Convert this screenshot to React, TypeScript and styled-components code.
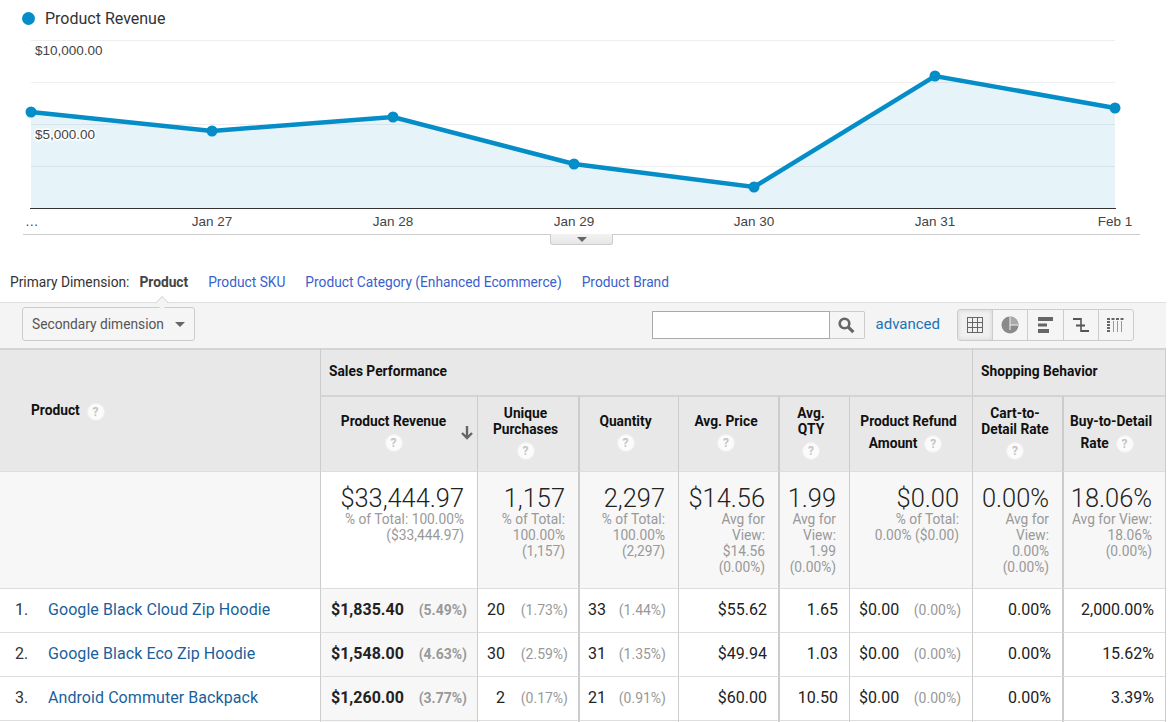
import React from 'react';
import styled, { createGlobalStyle } from 'styled-components';

const GlobalStyle = createGlobalStyle`
  html, body {
    margin: 0;
    padding: 0;
    background: #fff;
    overflow: hidden;
    font-family: Roboto, "Liberation Sans", sans-serif;
    color: #212121;
  }
`;

const Page = styled.div`
  width: 1166px;
  height: 722px;
  overflow: hidden;
`;

const Legend = styled.div`
  display: flex;
  align-items: center;
  gap: 10px;
  height: 36px;
  padding-left: 22px;
  font-size: 16px;
  color: #333;
`;

const LegendDot = styled.span`
  width: 13px;
  height: 13px;
  border-radius: 50%;
  background: #058dc7;
`;

const ChartSvg = styled.svg`
  display: block;
  width: 1166px;
  height: 199px;
`;

const ToggleRow = styled.div`
  display: flex;
  align-items: flex-start;
  height: 33px;
  padding-left: 550px;
`;

const Toggle = styled.div`
  width: 63px;
  height: 11px;
  margin-top: -1px;
  box-sizing: border-box;
  display: flex;
  justify-content: center;
  align-items: center;
  background: linear-gradient(#f2f2f2, #e6e6e6);
  border: 1px solid #ccc;
  border-top: none;
  border-radius: 0 0 3px 3px;

  &::after {
    content: '';
    border-left: 5px solid transparent;
    border-right: 5px solid transparent;
    border-top: 5px solid #666;
  }
`;

const DimensionRow = styled.div`
  position: relative;
  display: flex;
  align-items: center;
  height: 34px;
  padding: 0 0 6px 10px;
  box-sizing: border-box;
  font-size: 13.75px;
  color: #333;
`;

const DimensionLabel = styled.span`
  margin-right: 10px;
`;

const DimensionCurrent = styled.span`
  font-weight: 700;
  color: #444;
  margin-right: 20px;
`;

const DimensionLink = styled.a`
  color: #3a5fcd;
  margin-right: 20px;
`;

const Notch = styled.span`
  position: absolute;
  left: 157px;
  bottom: -1px;
  width: 9px;
  height: 9px;
  background: #f4f4f4;
  border-top: 1px solid #ddd;
  border-left: 1px solid #ddd;
  transform: translateY(5px) rotate(45deg);
`;

const Toolbar = styled.div`
  display: flex;
  align-items: center;
  height: 46px;
  padding: 0 32px 3px 22px;
  box-sizing: border-box;
  background: #f4f4f4;
  border-top: 1px solid #e0e0e0;
`;

const SecondaryButton = styled.div`
  display: flex;
  align-items: center;
  justify-content: space-between;
  width: 173px;
  height: 34px;
  padding: 0 9px;
  box-sizing: border-box;
  margin-right: auto;
  background: #f5f5f5;
  border: 1px solid #ccc;
  border-radius: 3px;
  font-size: 13.75px;
  color: #555;

  &::after {
    content: '';
    border-left: 5px solid transparent;
    border-right: 5px solid transparent;
    border-top: 5px solid #666;
  }
`;

const SearchBox = styled.div`
  display: flex;
  width: 213px;
  height: 28px;
  margin-top: 2px;
`;

const SearchInput = styled.div`
  flex: 1;
  background: #fff;
  border: 1px solid #aaa;
`;

const SearchButton = styled.div`
  width: 35px;
  display: flex;
  align-items: center;
  justify-content: center;
  box-sizing: border-box;
  background: #f5f5f5;
  border: 1px solid #ccc;
  border-left: none;
  border-radius: 0 2px 2px 0;
`;

const Advanced = styled.a`
  margin: 0 17px 0 11px;
  font-size: 15px;
  color: #1a73b5;
`;

const ViewSwitch = styled.div`
  display: flex;
  width: 177px;
  height: 32px;
  margin-top: 2px;
  box-sizing: border-box;
  border: 1px solid #ccc;
  border-radius: 3px;
  background: #f5f5f5;
`;

const ViewButton = styled.div<{ $active?: boolean }>`
  flex: 1;
  display: flex;
  align-items: center;
  justify-content: center;
  background: ${(p) => (p.$active ? '#f0f0f0' : 'transparent')};
  box-shadow: ${(p) => (p.$active ? 'inset 0 0 4px #d0d0d0' : 'none')};

  & + & {
    border-left: 1px solid #ccc;
  }
`;

const Table = styled.table`
  width: 1166px;
  table-layout: fixed;
  border-collapse: separate;
  border-spacing: 0;
  font-size: 13.75px;
  border-right: 1px solid #ccc;
`;

const Head = styled.th<{ $thick?: boolean; $center?: boolean; $endPad?: number }>`
  position: relative;
  box-sizing: border-box;
  padding: 0 ${(p) => p.$endPad ?? 8}px 0 8px;
  background: #e8e8e8;
  font-weight: 700;
  line-height: 16px;
  color: #111;
  text-align: ${(p) => (p.$center ? 'center' : 'left')};
  vertical-align: middle;
  border-top: 2px solid #d4d4d4;
  border-left: ${(p) => (p.$thick ? '2px solid #ccc' : '1px solid #ccc')};
`;

const GroupHead = styled(Head)`
  padding-bottom: 4px;
`;

const ColumnHead = styled(Head)`
  padding-bottom: 5px;
`;

const ProductHead = styled(Head)`
  padding-left: 31px;
  padding-top: 2px;
  border-left: none;
`;

const HeadLine = styled.div<{ $inset?: number }>`
  margin: 0 -4px;
  padding-right: ${(p) => p.$inset ?? 0}px;
  line-height: 22px;
  white-space: nowrap;
`;

const Help = styled.span`
  display: inline-flex;
  align-items: center;
  justify-content: center;
  width: 18px;
  height: 18px;
  border-radius: 50%;
  background: #fbfbfb;
  border: 1px solid #efefef;
  box-sizing: border-box;
  font-size: 12px;
  font-weight: 700;
  color: #c4c4c4;
  vertical-align: middle;
`;

const HelpRow = styled.div`
  margin-top: 4px;
  height: 18px;
  line-height: 18px;
`;

const SortArrow = styled.svg`
  position: absolute;
  right: 3px;
  top: 28px;
`;

const SummaryCell = styled.td<{ $primary?: boolean; $thick?: boolean }>`
  box-sizing: border-box;
  height: 117px;
  padding: 14px 13px 0 6px;
  vertical-align: top;
  text-align: right;
  background: ${(p) => (p.$primary ? '#fff' : '#f7f7f7')};
  border-top: 1px solid #ddd;
  border-left: ${(p) => (p.$thick ? '2px solid #ccc' : '1px solid #ccc')};
`;

const SummaryBlank = styled(SummaryCell)`
  border-left: none;
`;

const SummaryValue = styled.div`
  font-size: 25.4px;
  font-weight: 300;
  line-height: 25px;
  color: #222;
`;

const SummaryNote = styled.div`
  font-size: 13.75px;
  line-height: 16px;
  color: #999;
`;

const DataCell = styled.td<{ $primary?: boolean; $thick?: boolean; $endPad?: number }>`
  box-sizing: border-box;
  height: 44px;
  padding: 0 ${(p) => p.$endPad ?? 11}px 2px ${(p) => (p.$primary ? 10 : p.$thick ? 8 : 9)}px;
  vertical-align: middle;
  font-size: 16px;
  color: #222;
  background: ${(p) => (p.$primary ? '#f7f7f7' : '#fff')};
  border-top: 1px solid #ddd;
  border-left: ${(p) => (p.$thick ? '2px solid #ccc' : '1px solid #ccc')};
`;

const ProductCell = styled(DataCell)`
  padding-left: 15px;
  border-left: none;
`;

const RowIndex = styled.span`
  display: inline-block;
  width: 33px;
  color: #333;
`;

const ProductLink = styled.a`
  letter-spacing: 0.07px;
  color: #1a5f9c;
`;

const Split = styled.div`
  display: flex;
  justify-content: space-between;
  align-items: center;
`;

const Value = styled.span<{ $bold?: boolean; $slot?: number }>`
  font-weight: ${(p) => (p.$bold ? 700 : 400)};
  min-width: ${(p) => p.$slot ?? 0}px;
  text-align: right;
`;

const Percent = styled.span<{ $bold?: boolean }>`
  font-size: 14px;
  font-weight: ${(p) => (p.$bold ? 700 : 400)};
  color: #999;
`;

const Right = styled.div`
  text-align: right;
`;

const points: [number, number][] = [
  [31, 112], [212, 131], [393, 117], [574, 164], [754, 187], [935, 76], [1115, 108],
];
const ticks: [number, string][] = [
  [212, 'Jan 27'], [393, 'Jan 28'], [574, 'Jan 29'], [754, 'Jan 30'], [935, 'Jan 31'], [1115, 'Feb 1'],
];
const gridY = [40, 82, 124, 166];

const widths = [320, 157, 101, 100, 100, 71, 123, 90, 103];

const summary: { value: string; notes: string[]; thick?: boolean; primary?: boolean }[] = [
  { value: '$33,444.97', notes: ['% of Total: 100.00%', '($33,444.97)'], primary: true },
  { value: '1,157', notes: ['% of Total:', '100.00%', '(1,157)'] },
  { value: '2,297', notes: ['% of Total:', '100.00%', '(2,297)'], thick: true },
  { value: '$14.56', notes: ['Avg for', 'View:', '$14.56', '(0.00%)'] },
  { value: '1.99', notes: ['Avg for', 'View:', '1.99', '(0.00%)'], thick: true },
  { value: '$0.00', notes: ['% of Total:', '0.00% ($0.00)'] },
  { value: '0.00%', notes: ['Avg for', 'View:', '0.00%', '(0.00%)'] },
  { value: '18.06%', notes: ['Avg for View:', '18.06%', '(0.00%)'], thick: true },
];

const rows = [
  {
    name: 'Google Black Cloud Zip Hoodie', revenue: ['$1,835.40', '(5.49%)'], unique: ['20', '(1.73%)'],
    qty: ['33', '(1.44%)'], price: '$55.62', avg: '1.65', refund: ['$0.00', '(0.00%)'], cart: '0.00%', buy: '2,000.00%',
  },
  {
    name: 'Google Black Eco Zip Hoodie', revenue: ['$1,548.00', '(4.63%)'], unique: ['30', '(2.59%)'],
    qty: ['31', '(1.35%)'], price: '$49.94', avg: '1.03', refund: ['$0.00', '(0.00%)'], cart: '0.00%', buy: '15.62%',
  },
  {
    name: 'Android Commuter Backpack', revenue: ['$1,260.00', '(3.77%)'], unique: ['2', '(0.17%)'],
    qty: ['21', '(0.91%)'], price: '$60.00', avg: '10.50', refund: ['$0.00', '(0.00%)'], cart: '0.00%', buy: '3.39%',
  },
];

const Chart = () => (
  <ChartSvg viewBox="0 36 1166 199">
    {gridY.map((y) => (
      <line key={y} x1={31} x2={1115} y1={y + 0.5} y2={y + 0.5} stroke="#eee" />
    ))}
    <polygon
      points={`31,208 ${points.map((p) => p.join(',')).join(' ')} 1115,208`}
      fill="#058dc7"
      fillOpacity={0.1}
    />
    <line x1={30} x2={1116} y1={208.5} y2={208.5} stroke="#333" />
    <polyline
      points={points.map((p) => p.join(',')).join(' ')}
      fill="none"
      stroke="#058dc7"
      strokeWidth={4.5}
    />
    {points.map(([x, y]) => (
      <circle key={x} cx={x} cy={y} r={5.5} fill="#058dc7" />
    ))}
    <g fontFamily="'Liberation Sans', Arial, sans-serif" fontSize={13.5} fill="#444">
      <text x={35} y={55}>$10,000.00</text>
      <text x={35} y={139} stroke="#fff" strokeWidth={3} paintOrder="stroke">$5,000.00</text>
      <text x={25} y={226}>…</text>
      {ticks.map(([x, label]) => (
        <text key={label} x={x} y={226} textAnchor="middle">{label}</text>
      ))}
    </g>
    <line x1={23} x2={1140} y1={234.5} y2={234.5} stroke="#ccc" />
  </ChartSvg>
);

const SearchIcon = () => (
  <svg width="17" height="17" viewBox="0 0 17 17">
    <circle cx="6.5" cy="6.5" r="4.8" fill="none" stroke="#666" strokeWidth="2.6" />
    <line x1="10.2" y1="10.2" x2="15.4" y2="15.2" stroke="#666" strokeWidth="3.2" />
  </svg>
);

const GridIcon = () => (
  <svg width="16" height="16" viewBox="0 0 16 16" fill="none" stroke="#666">
    <rect x="0.5" y="0.5" width="15" height="15" />
    <path d="M5.5 0.5v15M10.5 0.5v15M0.5 5.5h15M0.5 10.5h15" />
  </svg>
);

const PieIcon = () => (
  <svg width="18" height="18" viewBox="0 0 18 18">
    <circle cx="9" cy="9" r="8.5" fill="#8a8a8a" />
    <path d="M9 .5A8.5 8.5 0 0 1 17.5 9H9Z" fill="#a8a8a8" />
    <path d="M9 .5V14M9 9h8.5" fill="none" stroke="#f0f0f0" />
  </svg>
);

const BarsIcon = () => (
  <svg width="16" height="18" viewBox="0 0 16 18" fill="#666">
    <rect x="0" y="1" width="15" height="4" />
    <rect x="0" y="7.5" width="9" height="3" />
    <rect x="0" y="13" width="11" height="4" />
  </svg>
);

const PivotIcon = () => (
  <svg width="16" height="18" viewBox="0 0 16 18" fill="none" stroke="#555">
    <path d="M0 3h8M3 9.5h9M8 15h8" strokeWidth="2" />
    <path d="M8 2v14" strokeWidth="1.6" />
  </svg>
);

const ColumnsIcon = () => (
  <svg width="18" height="14" viewBox="0 0 18 14">
    <path d="M0 1h18" stroke="#666" strokeWidth="2" strokeDasharray="3 1.5" />
    <path d="M1.5 3v11" stroke="#666" strokeWidth="3" strokeDasharray="2 1" />
    <path d="M6.5 3v11M10.5 3v11M14.5 3v11" stroke="#999" />
  </svg>
);

const HelpIcon = () => <Help>?</Help>;

const App: React.FC = () => (
  <Page>
    <GlobalStyle />
    <Legend>
      <LegendDot />
      Product Revenue
    </Legend>
    <Chart />
    <ToggleRow>
      <Toggle />
    </ToggleRow>
    <DimensionRow>
      <DimensionLabel>Primary Dimension:</DimensionLabel>
      <DimensionCurrent>Product</DimensionCurrent>
      <DimensionLink>Product SKU</DimensionLink>
      <DimensionLink>Product Category (Enhanced Ecommerce)</DimensionLink>
      <DimensionLink>Product Brand</DimensionLink>
      <Notch />
    </DimensionRow>
    <Toolbar>
      <SecondaryButton>Secondary dimension</SecondaryButton>
      <SearchBox>
        <SearchInput />
        <SearchButton><SearchIcon /></SearchButton>
      </SearchBox>
      <Advanced>advanced</Advanced>
      <ViewSwitch>
        <ViewButton $active><GridIcon /></ViewButton>
        <ViewButton><PieIcon /></ViewButton>
        <ViewButton><BarsIcon /></ViewButton>
        <ViewButton><PivotIcon /></ViewButton>
        <ViewButton><ColumnsIcon /></ViewButton>
      </ViewSwitch>
    </Toolbar>
    <Table>
      <colgroup>
        {widths.map((w, i) => <col key={i} style={{ width: w }} />)}
      </colgroup>
      <thead>
        <tr style={{ height: 47 }}>
          <ProductHead rowSpan={2}>Product &nbsp;<HelpIcon /></ProductHead>
          <GroupHead colSpan={6}>Sales Performance</GroupHead>
          <GroupHead colSpan={2}>Shopping Behavior</GroupHead>
        </tr>
        <tr style={{ height: 76 }}>
          <ColumnHead $center $endPad={19}>
            Product Revenue
            <HelpRow><HelpIcon /></HelpRow>
            <SortArrow width="14" height="15" viewBox="0 0 14 15">
              <path d="M7 1v12M2 8l5 5 5-5" fill="none" stroke="#666" strokeWidth="2.4" />
            </SortArrow>
          </ColumnHead>
          <ColumnHead $center $endPad={13}>
            Unique<br />Purchases
            <HelpRow><HelpIcon /></HelpRow>
          </ColumnHead>
          <ColumnHead $center $thick $endPad={15}>
            Quantity
            <HelpRow><HelpIcon /></HelpRow>
          </ColumnHead>
          <ColumnHead $center $endPad={13}>
            Avg. Price
            <HelpRow><HelpIcon /></HelpRow>
          </ColumnHead>
          <ColumnHead $center $thick $endPad={15}>
            Avg.<br />QTY
            <HelpRow><HelpIcon /></HelpRow>
          </ColumnHead>
          <ColumnHead $center $endPad={13}>
            <HeadLine>Product Refund</HeadLine>
            <HeadLine $inset={6}>Amount &nbsp;<HelpIcon /></HeadLine>
          </ColumnHead>
          <ColumnHead $center $endPad={13}>
            Cart-to-<br />Detail Rate
            <HelpRow><HelpIcon /></HelpRow>
          </ColumnHead>
          <ColumnHead $center $thick $endPad={15}>
            <HeadLine>Buy-to-Detail</HeadLine>
            <HeadLine $inset={8}>Rate &nbsp;<HelpIcon /></HeadLine>
          </ColumnHead>
        </tr>
      </thead>
      <tbody>
        <tr>
          <SummaryBlank />
          {summary.map((s) => (
            <SummaryCell key={s.value} $primary={s.primary} $thick={s.thick}>
              <SummaryValue>{s.value}</SummaryValue>
              {s.notes.map((n) => <SummaryNote key={n}>{n}</SummaryNote>)}
            </SummaryCell>
          ))}
        </tr>
        {rows.map((r, i) => (
          <tr key={r.name}>
            <ProductCell>
              <RowIndex>{i + 1}.</RowIndex>
              <ProductLink>{r.name}</ProductLink>
            </ProductCell>
            <DataCell $primary $endPad={10}>
              <Split>
                <Value $bold>{r.revenue[0]}</Value>
                <Percent $bold>{r.revenue[1]}</Percent>
              </Split>
            </DataCell>
            <DataCell $endPad={10}>
              <Split>
                <Value $slot={18}>{r.unique[0]}</Value>
                <Percent>{r.unique[1]}</Percent>
              </Split>
            </DataCell>
            <DataCell $thick $endPad={12}>
              <Split>
                <Value>{r.qty[0]}</Value>
                <Percent>{r.qty[1]}</Percent>
              </Split>
            </DataCell>
            <DataCell><Right>{r.price}</Right></DataCell>
            <DataCell $thick><Right>{r.avg}</Right></DataCell>
            <DataCell>
              <Split>
                <Value>{r.refund[0]}</Value>
                <Percent>{r.refund[1]}</Percent>
              </Split>
            </DataCell>
            <DataCell><Right>{r.cart}</Right></DataCell>
            <DataCell $thick><Right>{r.buy}</Right></DataCell>
          </tr>
        ))}
        <tr>
          <ProductCell />
          <DataCell $primary />
          <DataCell />
          <DataCell $thick />
          <DataCell />
          <DataCell $thick />
          <DataCell />
          <DataCell />
          <DataCell $thick />
        </tr>
      </tbody>
    </Table>
  </Page>
);

export default App;
